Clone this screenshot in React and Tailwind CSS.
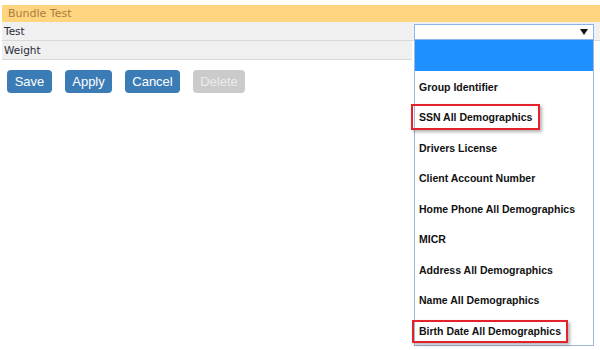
import React from "react";

const items = [
  "Group Identifier",
  "SSN All Demographics",
  "Drivers License",
  "Client Account Number",
  "Home Phone All Demographics",
  "MICR",
  "Address All Demographics",
  "Name All Demographics",
  "Birth Date All Demographics",
];

export default function App() {
  return (
    <div className="relative w-[600px] h-[350px] bg-white overflow-hidden">
      <div className="pt-[5px] pl-[2px]">
        <div
          className="h-[17px] bg-[#ffd57f] text-[#a87d3f] text-[11px] leading-[17px] pl-[6px]"
          style={{ fontFamily: '"DejaVu Sans", Verdana, sans-serif' }}
        >
          Bundle Test
        </div>
        <div
          className="text-[10.5px] text-[#2a2a3a]"
          style={{ fontFamily: '"DejaVu Sans", Verdana, sans-serif' }}
        >
          <div className="h-[19px] bg-[#f0f0f0] border-b border-[#d9d9d9] leading-[18px] pl-[2px]">
            Test
          </div>
          <div className="h-[19px] w-[410px] bg-[#f0f0f0] border-b border-[#d9d9d9] leading-[18px] pl-[2px]">
            Weight
          </div>
        </div>
        <div
          className="flex gap-[13px] mt-[10px] ml-[5px] text-[13px] text-white"
          style={{ fontFamily: '"Liberation Sans", Arial, sans-serif' }}
        >
          <button className="h-[23px] w-[45px] rounded-[4px] bg-[#3c7cb6] leading-[23px]">Save</button>
          <button className="h-[23px] w-[47px] rounded-[4px] bg-[#3c7cb6] leading-[23px]">Apply</button>
          <button className="h-[23px] w-[55px] rounded-[4px] bg-[#3c7cb6] leading-[23px]">Cancel</button>
          <button className="h-[23px] w-[52px] rounded-[4px] bg-[#cbcbcb] text-[#ececec] leading-[23px]">Delete</button>
        </div>
      </div>

      <div className="absolute left-[414px] top-[24px] w-[180px]">
        <div className="h-[16px] bg-white border border-[#8fb3e8] flex items-center justify-end pr-[5px]">
          <svg width="8" height="6" viewBox="0 0 8 6">
            <path d="M0 0 L8 0 L4 6 Z" fill="#111" />
          </svg>
        </div>
        <div
          className="border-x border-b border-[#9fb6da] bg-white text-[10.5px] font-bold text-[#111]"
          style={{ fontFamily: '"Liberation Sans", Arial, sans-serif' }}
        >
          <div className="h-[30.5px] bg-[#1e90ff]" />
          {items.map((t) => (
            <div key={t} className="h-[30.5px] leading-[30.5px] pt-[1px] pl-[4px] whitespace-nowrap">
              {t}
            </div>
          ))}
        </div>
      </div>

      <div className="absolute left-[411px] top-[104px] w-[129px] h-[26px] border-2 border-[#e3222b] shadow-[2px_2px_3px_rgba(0,0,0,0.3)]" />
      <div className="absolute left-[412px] top-[320px] w-[156px] h-[23px] border-2 border-[#e3222b] shadow-[2px_2px_3px_rgba(0,0,0,0.3)]" />
    </div>
  );
}
